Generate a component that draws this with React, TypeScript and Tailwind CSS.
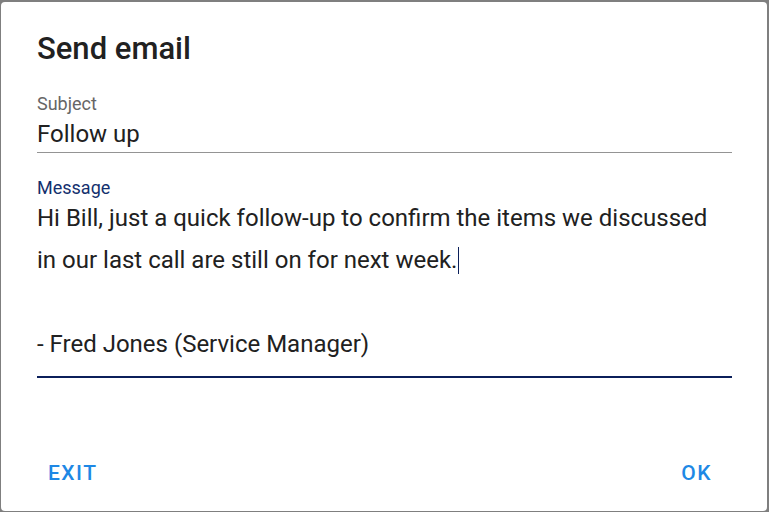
import React from 'react';

export default function App() {
  return (
    <div
      className="h-[512px] w-[769px] overflow-hidden bg-[#7f7f7f] pl-[1px] pt-[2px]"
      style={{ fontFamily: 'Roboto, "Liberation Sans", sans-serif' }}
    >
      <div className="h-[509px] w-[766px] rounded-[4px] bg-white pl-[36px] pr-[35px] text-[#212121]">
        <h1 className="pt-[29px] text-[31px] font-medium leading-[36px]">Send email</h1>

        <div className="mt-[27px] text-[18px] leading-[20px] text-[#666666]">Subject</div>
        <div className="mt-[6px] border-b border-[#949494] pb-[4px] text-[24px] leading-[28px]">
          Follow up
        </div>

        <div className="mt-[27px] text-[18px] leading-[16px] text-[#14306e]">Message</div>
        <div className="mt-[1px] border-b-2 border-[#0b1f5a] pb-[11px] text-[24px] leading-[42px]">
          <div>Hi Bill, just a quick follow-up to confirm the items we discussed</div>
          <div>
            in our last call are still on for next week.
            <span className="ml-[1px] inline-block h-[27px] w-px translate-y-[6px] bg-[#0b1f5a]" />
          </div>
          <div>&nbsp;</div>
          <div>- Fred Jones (Service Manager)</div>
        </div>

        <div className="mt-[83px] flex justify-between pl-[11px] pr-[20px]">
          <button type="button" className="text-[21px] font-medium uppercase leading-[24px] tracking-[1.5px] text-[#1e88e5]">
            Exit
          </button>
          <button type="button" className="text-[21px] font-medium uppercase leading-[24px] tracking-[1.5px] text-[#1e88e5]">
            Ok
          </button>
        </div>
      </div>
    </div>
  );
}
